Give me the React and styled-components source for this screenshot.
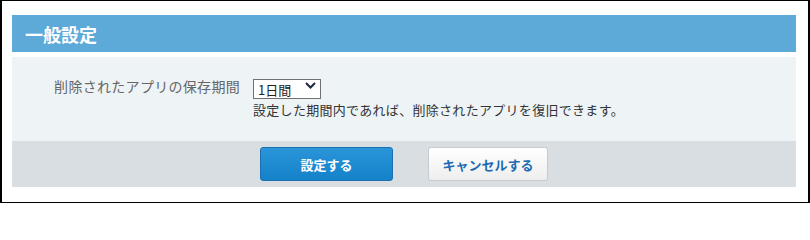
import React from 'react'
import styled, { createGlobalStyle } from 'styled-components'

const GlobalStyle = createGlobalStyle`
  html, body {
    margin: 0;
    padding: 0;
    background: #fff;
  }
  body {
    font-family: "Noto Sans CJK JP", "Noto Sans", sans-serif;
  }
`

const Frame = styled.div`
  width: 810px;
  height: 203px;
  box-sizing: border-box;
  border: 1px solid #000;
  border-left-width: 2px;
  border-right-width: 2px;
  padding: 14px 12px 14px 10px;
`

const Title = styled.h1`
  margin: 0;
  height: 37px;
  padding-left: 13px;
  display: flex;
  align-items: center;
  background: #5daad9;
  color: #fff;
  font-size: 18px;
  font-weight: 700;
`

const Body = styled.div`
  margin-top: 5px;
  background: #eef3f6;
  padding: 19px 0 0;
  height: 84px;
  box-sizing: border-box;
`

const Row = styled.div`
  display: grid;
  grid-template-columns: 228px 1fr;
  column-gap: 13px;
`

const Label = styled.div`
  text-align: right;
  color: #666;
  font-size: 14px;
  letter-spacing: 0.3px;
  line-height: 20px;
`

const Field = styled.div`
  display: flex;
  flex-direction: column;
  align-items: flex-start;
  gap: 5px;
`

const SelectWrap = styled.div`
  position: relative;
  width: 68px;
  height: 20px;
`

const Select = styled.select`
  appearance: none;
  width: 100%;
  height: 100%;
  box-sizing: border-box;
  border: 1px solid #707070;
  border-radius: 0;
  background: #fff;
  padding: 0 0 0 4px;
  font-family: inherit;
  font-size: 13px;
  color: #222;
  outline: none;
`

const Chevron = styled.svg`
  position: absolute;
  right: 5px;
  top: 6px;
  pointer-events: none;
`

const Help = styled.div`
  color: #333;
  font-size: 13px;
  letter-spacing: 0.3px;
  line-height: 18px;
`

const Footer = styled.div`
  background: #d9dee2;
  height: 46px;
  display: flex;
  justify-content: center;
  align-items: center;
  gap: 35px;
`

const Button = styled.button`
  height: 34px;
  box-sizing: border-box;
  border-radius: 3px;
  font-family: inherit;
  font-size: 13px;
  font-weight: 700;
  cursor: pointer;
  border: 1px solid ${props => (props.primary ? '#1a70b0' : '#c6cbcf')};
  background: ${props =>
    props.primary
      ? 'linear-gradient(#2a95d8, #1481c9)'
      : 'linear-gradient(#ffffff, #eeeeee)'};
  color: ${props => (props.primary ? '#fff' : '#1d6bb0')};
  width: ${props => props.width}px;
`

const App = () => (
  <>
    <GlobalStyle />
    <Frame>
      <Title>一般設定</Title>
      <Body>
        <Row>
          <Label>削除されたアプリの保存期間</Label>
          <Field>
            <SelectWrap>
              <Select defaultValue="1">
                <option value="1">1日間</option>
                <option value="7">7日間</option>
                <option value="14">14日間</option>
                <option value="30">30日間</option>
              </Select>
              <Chevron width="11" height="7" viewBox="0 0 11 7">
                <path d="M1 1 L5.5 5.5 L10 1" fill="none" stroke="#1c2740" strokeWidth="2" />
              </Chevron>
            </SelectWrap>
            <Help>設定した期間内であれば、削除されたアプリを復旧できます。</Help>
          </Field>
        </Row>
      </Body>
      <Footer>
        <Button primary width={133}>設定する</Button>
        <Button width={120}>キャンセルする</Button>
      </Footer>
    </Frame>
  </>
)

export default App
